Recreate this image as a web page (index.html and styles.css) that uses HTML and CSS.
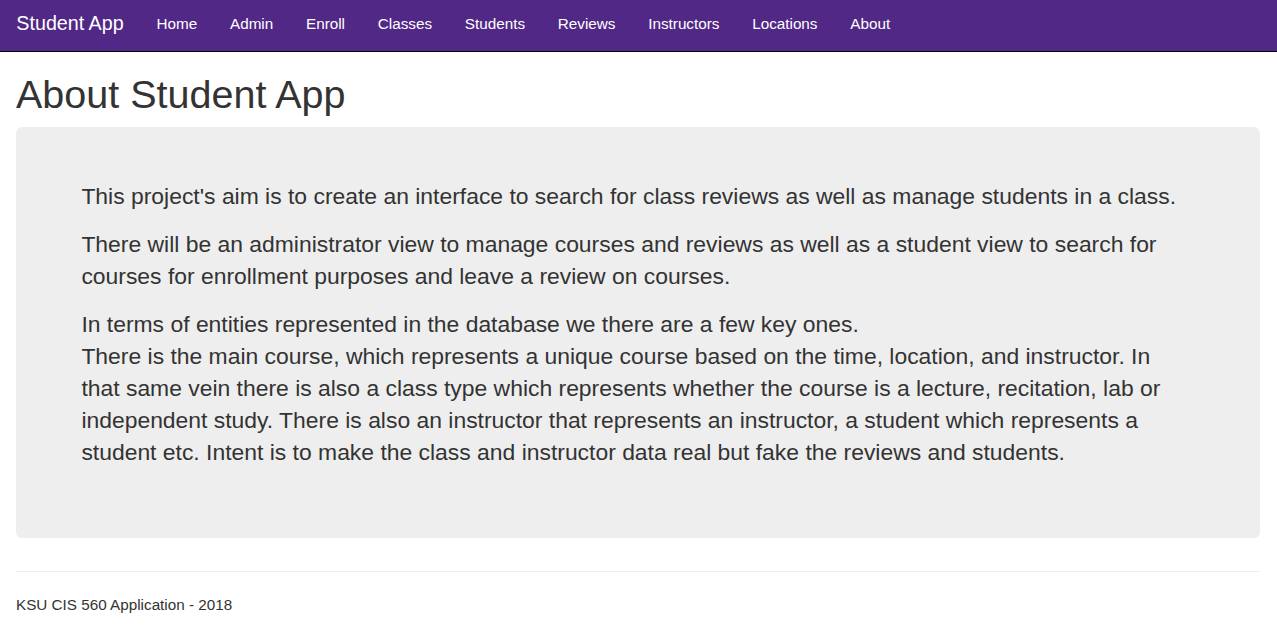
FILE: index.html
```html
<!DOCTYPE html>
<html lang="en">
<head>
<meta charset="utf-8">
<title>About - Student App</title>
<link rel="stylesheet" href="styles.css">
</head>
<body>
<nav class="navbar">
  <a class="brand" href="#">Student App</a>
  <ul class="nav">
    <li><a href="#">Home</a></li>
    <li><a href="#">Admin</a></li>
    <li><a href="#">Enroll</a></li>
    <li><a href="#">Classes</a></li>
    <li><a href="#">Students</a></li>
    <li><a href="#">Reviews</a></li>
    <li><a href="#">Instructors</a></li>
    <li><a href="#">Locations</a></li>
    <li><a href="#">About</a></li>
  </ul>
</nav>
<div class="body-content">
  <h1 class="title">About Student App</h1>
  <div class="jumbotron">
    <p>This project's aim is to create an interface to search for class reviews as well as manage students in a class.</p>
    <p>There will be an administrator view to manage courses and reviews as well as a student view to search for courses for enrollment purposes and leave a review on courses.</p>
    <p>In terms of entities represented in the database we there are a few key ones.<br>There is the main course, which represents a unique course based on the time, location, and instructor. In that same vein there is also a class type which represents whether the course is a lecture, recitation, lab or independent study. There is also an instructor that represents an instructor, a student which represents a student etc. Intent is to make the class and instructor data real but fake the reviews and students.</p>
  </div>
  <hr class="divider">
  <footer class="footer">
    <p>KSU CIS 560 Application - 2018</p>
  </footer>
</div>
</body>
</html>
```

FILE: styles.css
```css
* { box-sizing: border-box; }
html, body { margin: 0; padding: 0; }
body {
  font-family: "Liberation Sans", Arial, Helvetica, sans-serif;
  font-size: 15.25px;
  line-height: 21.8px;
  color: #333;
  background: #fff;
}
a { text-decoration: none; }
.navbar {
  display: flex;
  align-items: stretch;
  height: 52px;
  background: #522887;
  border-bottom: 1px solid #000;
}
.brand {
  display: flex;
  align-items: center;
  height: 51px;
  padding: 0 16.5px 3px 16.35px;
  font-size: 19.7px;
  color: #fff;
}
.nav {
  display: flex;
  list-style: none;
  margin: 0;
  padding: 0;
}
.nav li a {
  display: flex;
  align-items: center;
  height: 51px;
  padding: 0 16.4px 3px;
  color: #fff;
  font-size: 15.25px;
}
.body-content {
  padding: 0 17px 0 16px;
}
.title {
  margin: 21px 0 11px;
  font-size: 39.5px;
  line-height: 43.1px;
  font-weight: 500;
  color: #333;
}
.jumbotron {
  background: #eee;
  border-radius: 6px;
  padding: 52.5px 65.4px 53px;
  margin-bottom: 33px;
}
.jumbotron p {
  margin: 0 0 16.35px;
  font-size: 22.9px;
  line-height: 32px;
  font-weight: 200;
}
.divider {
  margin: 0;
  border: 0;
  border-top: 1px solid #eee;
}
.footer p {
  margin: 22.5px 0 0;
  font-size: 15.25px;
  line-height: 21.8px;
}
```
